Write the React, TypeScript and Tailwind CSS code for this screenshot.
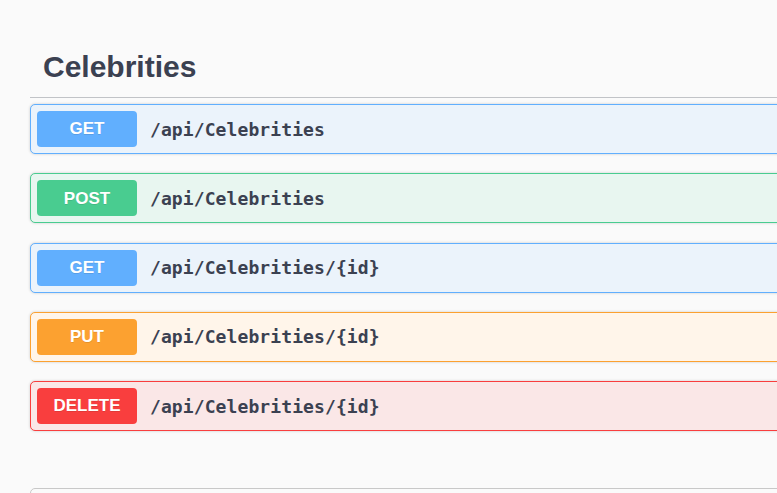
import React from 'react'

type Op = { method: string; path: string; badge: string; box: string }

const ops: Op[] = [
  { method: 'GET', path: '/api/Celebrities', badge: 'bg-[#61affe]', box: 'bg-[#ebf3fb] border-[#61affe]' },
  { method: 'POST', path: '/api/Celebrities', badge: 'bg-[#49cc90]', box: 'bg-[#e8f6f0] border-[#49cc90]' },
  { method: 'GET', path: '/api/Celebrities/{id}', badge: 'bg-[#61affe]', box: 'bg-[#ebf3fb] border-[#61affe]' },
  { method: 'PUT', path: '/api/Celebrities/{id}', badge: 'bg-[#fca130]', box: 'bg-[#fff5ea] border-[#fca130]' },
  { method: 'DELETE', path: '/api/Celebrities/{id}', badge: 'bg-[#f93e3e]', box: 'bg-[#fae7e7] border-[#f93e3e]' },
]

function OpBlock({ op }: { op: Op }) {
  return (
    <div className={`mb-[19.25px] flex items-center rounded-[5px] border p-[6px] shadow-[0_0_3px_rgba(0,0,0,0.19)] ${op.box}`}>
      <span
        className={`flex h-[36px] w-[100px] items-center justify-center rounded-[4px] text-[17px] font-bold text-white [text-shadow:0_1px_0_rgba(0,0,0,0.1)] ${op.badge}`}
        style={{ fontFamily: '"Liberation Sans", Arial, sans-serif' }}
      >
        {op.method}
      </span>
      <span
        className="px-[13px] text-[18px] font-bold tracking-[0.1px] text-[#3b4151]"
        style={{ fontFamily: '"DejaVu Sans Mono", monospace' }}
      >
        {op.path}
      </span>
    </div>
  )
}

export default function App() {
  return (
    <div className="h-[493px] w-[777px] overflow-hidden bg-[#fafafa]" style={{ fontFamily: '"Liberation Sans", Arial, sans-serif' }}>
      <div className="w-[1200px] pl-[30px]">
        <h3 className="border-b border-[#c1c3c7] pb-[12px] pl-[13px] pt-[49px] text-[30px] font-bold leading-[36px] text-[#3b4151]">
          Celebrities
        </h3>
        <div className="mt-[6px]">
          {ops.map((op, i) => (
            <OpBlock key={i} op={op} />
          ))}
        </div>
        <div className="mt-[57px] h-[40px] rounded-[5px] border border-[#c8c8c8] bg-[#fafafa]" />
      </div>
    </div>
  )
}
